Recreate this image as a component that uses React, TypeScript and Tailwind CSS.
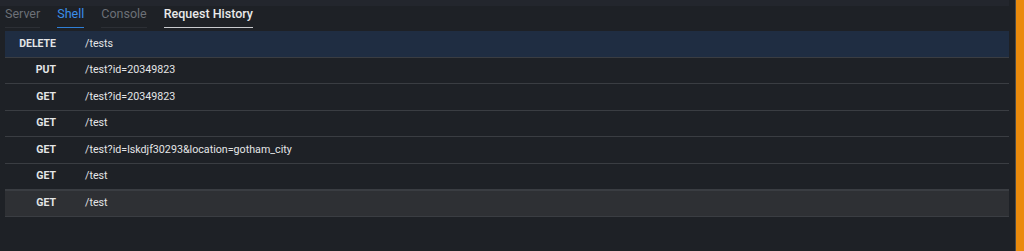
import React from 'react';

const TABS = [
  { label: 'Server', text: 'text-[#6c7077]', bar: 'bg-[#2c2f35]' },
  { label: 'Shell', text: 'text-[#3b8eea]', bar: 'bg-[#2f7fd6]' },
  { label: 'Console', text: 'text-[#6c7077]', bar: 'bg-[#2c2f35]' },
  { label: 'Request History', text: 'text-[#e8e9ea] font-medium', bar: 'bg-[#c9cbce]' },
];

const REQUESTS = [
  { method: 'DELETE', path: '/tests' },
  { method: 'PUT', path: '/test?id=20349823' },
  { method: 'GET', path: '/test?id=20349823' },
  { method: 'GET', path: '/test' },
  { method: 'GET', path: '/test?id=lskdjf30293&location=gotham_city' },
  { method: 'GET', path: '/test' },
  { method: 'GET', path: '/test' },
];

export default function App() {
  return (
    <div
      className="flex h-[251px] w-[1024px] overflow-hidden bg-[#1e2126]"
      style={{ fontFamily: 'Roboto, "Liberation Sans", sans-serif' }}
    >
      <div className="flex flex-1 flex-col">
        <div className="h-[6px] w-[1009px] bg-[#23262d]" />
        {/* Tabs */}
        <div className="flex gap-[17px] pl-[5px]">
          {TABS.map((t) => (
            <div key={t.label} className="flex flex-col">
              <span className={`h-[16px] text-[12.5px] leading-[16px] ${t.text}`}>{t.label}</span>
              <div className={`mt-[5px] h-[1px] ${t.bar}`} />
            </div>
          ))}
        </div>

        {/* Request rows */}
        <div className="mt-[3px] ml-[5px] w-[1004px]">
          {REQUESTS.map((r, i) => (
            <div
              key={i}
              className={`flex h-[26.5px] items-center border-b border-[#3a3d42] text-[#e4e5e6] ${
                i === 0 ? 'bg-[#1f2d42]' : i === REQUESTS.length - 1 ? 'border-t bg-[#2e3034]' : ''
              }`}
            >
              <span className="w-[51px] text-right text-[10.5px] font-bold">{r.method}</span>
              <span className="ml-[29px] text-[10.7px]">{r.path}</span>
            </div>
          ))}
        </div>
      </div>
      <div className="w-[1px] bg-[#4a4a48] ml-[5px]" />
      <div className="w-[8px] bg-[#ea8a0c]" />
    </div>
  );
}
